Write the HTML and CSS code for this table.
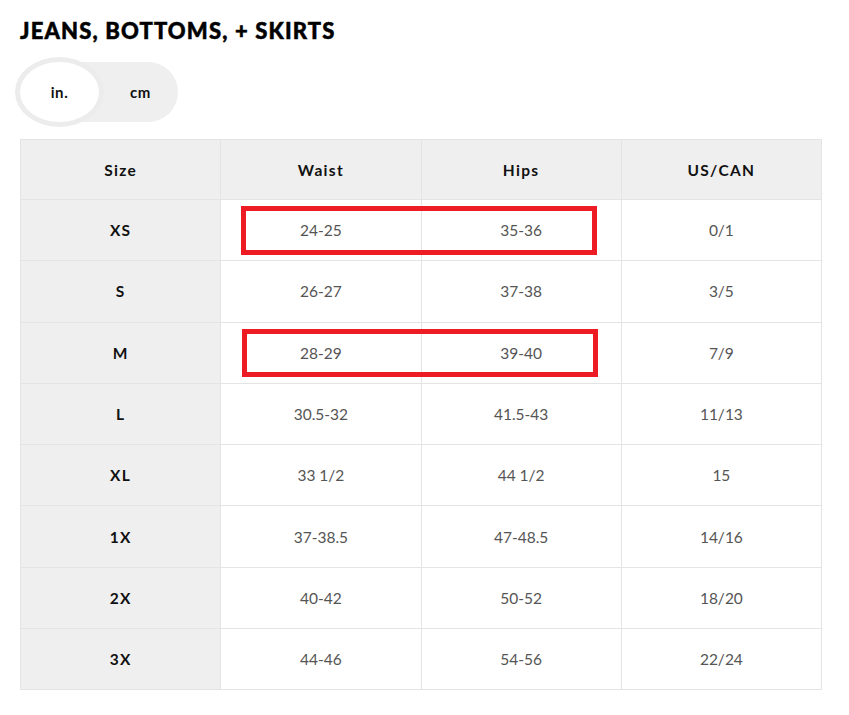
FILE: index.html
```html
<!DOCTYPE html>
<html>
<head>
<meta charset="utf-8">
<link rel="stylesheet" href="styles.css">
</head>
<body>
<div class="page">
  <h2 class="title">JEANS, BOTTOMS, + SKIRTS</h2>
  <div class="toggle">
    <span class="opt active">in.</span>
    <span class="opt alt">cm</span>
  </div>
  <div class="chart">
    <table class="sizes">
      <thead>
        <tr><th>Size</th><th>Waist</th><th>Hips</th><th>US/CAN</th></tr>
      </thead>
      <tbody>
        <tr><th>XS</th><td>24-25</td><td>35-36</td><td>0/1</td></tr>
        <tr><th>S</th><td>26-27</td><td>37-38</td><td>3/5</td></tr>
        <tr><th>M</th><td>28-29</td><td>39-40</td><td>7/9</td></tr>
        <tr><th>L</th><td>30.5-32</td><td>41.5-43</td><td>11/13</td></tr>
        <tr><th>XL</th><td>33 1/2</td><td>44 1/2</td><td>15</td></tr>
        <tr><th>1X</th><td>37-38.5</td><td>47-48.5</td><td>14/16</td></tr>
        <tr><th>2X</th><td>40-42</td><td>50-52</td><td>18/20</td></tr>
        <tr><th>3X</th><td>44-46</td><td>54-56</td><td>22/24</td></tr>
      </tbody>
    </table>
    <div class="mark mark-xs"></div>
    <div class="mark mark-m"></div>
  </div>
</div>
</body>
</html>
```
FILE: styles.css
```css
* { box-sizing: border-box; }
body {
  margin: 0;
  background: #fff;
  font-family: "Lato", "Liberation Sans", sans-serif;
  color: #111;
}
.page {
  padding: 0 20px;
}
.title {
  margin: 0;
  padding-top: 17px;
  font-size: 22px;
  line-height: 27px;
  font-weight: 900;
  letter-spacing: 1.15px;
  color: #000;
  -webkit-text-stroke: 0.5px #000;
}
.toggle {
  margin-top: 18px;
  width: 158px;
  height: 60px;
  border-radius: 30px;
  background: #efefef;
  display: flex;
  align-items: center;
}
.opt {
  width: 80px;
  height: 60px;
  display: flex;
  align-items: center;
  justify-content: center;
  font-size: 15px;
  font-weight: 700;
  letter-spacing: 0.6px;
  color: #111;
}
.opt.alt {
  padding-left: 4px;
}
.opt.active {
  background: #fff;
  border-radius: 50%;
  box-shadow: 0 0 0 5px #ececec;
}
.chart {
  position: relative;
  margin-top: 17px;
  width: 802px;
}
.sizes {
  width: 802px;
  table-layout: fixed;
  border-collapse: collapse;
}
.sizes th, .sizes td {
  height: 61.3px;
  padding: 0;
  border: 1px solid #e4e4e4;
  text-align: center;
  vertical-align: middle;
  font-size: 15.5px;
}
.sizes thead th {
  height: 60px;
  background: #efefef;
  font-weight: 700;
  letter-spacing: 1.3px;
  color: #111;
}
.sizes tbody th {
  background: #efefef;
  font-weight: 700;
  letter-spacing: 1.3px;
  color: #111;
}
.sizes td {
  color: #555;
  font-weight: 400;
}
.mark {
  position: absolute;
  border: 5px solid #ed1c24;
  width: 356px;
}
.mark-xs { left: 221px; top: 67px; height: 49px; }
.mark-m { left: 222px; top: 190px; height: 48px; }
```
